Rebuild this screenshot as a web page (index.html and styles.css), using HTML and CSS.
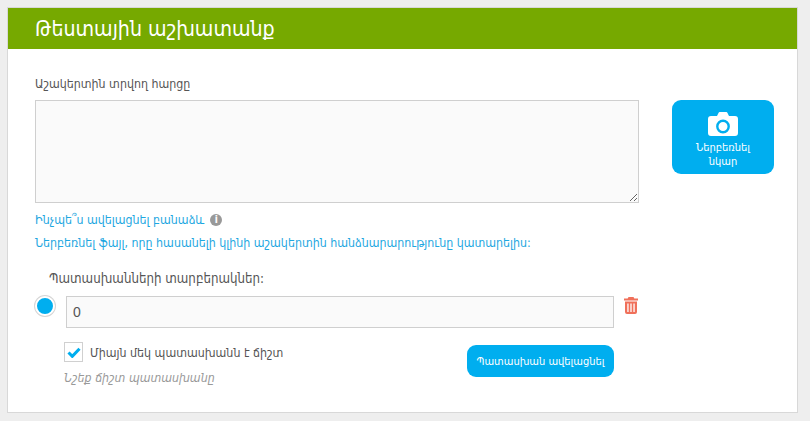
FILE: index.html
```html
<!DOCTYPE html>
<html lang="hy">
<head>
  <meta charset="UTF-8" />
  <meta name="viewport" content="width=device-width, initial-scale=1.0"/>
  <title>Թեստային աշխատանք</title>
  <link rel="stylesheet" href="styles.css">
</head>
<body>

  <div class="card">
    <h1 class="card-title">Թեստային աշխատանք</h1>

    <div class="card-body">
      <div class="question-row">
        <div class="question-col">
          <label class="field-label">Աշակերտին տրվող հարցը</label>
          <textarea class="question-input"></textarea>
        </div>
        <button class="upload-btn">
          <svg class="camera-icon" viewBox="0 0 30 24">
            <path fill="#fff" d="M3 4h6l1.500-3a1.500 1.500 0 0 1 1.300-1h6.400a1.500 1.500 0 0 1 1.300 1L21 4h6a3 3 0 0 1 3 3v14a3 3 0 0 1-3 3H3a3 3 0 0 1-3-3V7a3 3 0 0 1 3-3z"/>
            <circle cx="15" cy="14.500" r="5.700" fill="#fff" stroke="#00aeef" stroke-width="2.400"/>
          </svg>
          <span>Ներբեռնել<br>նկար</span>
        </button>
      </div>

      <div class="link-row">
        <a class="link">Ինչպե՞ս ավելացնել բանաձև</a>
        <span class="info-icon">i</span>
      </div>
      <div class="link-row second">
        <a class="link">Ներբեռնել ֆայլ, որը հասանելի կլինի աշակերտին հանձնարարությունը կատարելիս:</a>
      </div>

      <div class="answers">
        <div class="answers-label">Պատասխանների տարբերակներ:</div>
        <div class="answer-row">
          <span class="radio"></span>
          <input class="answer-input" type="text" value="0" />
          <svg class="trash-icon" viewBox="0 0 14 17">
            <path fill="#f0705a" fill-rule="evenodd" d="M4.500 0h5l.8 1.500H14v2H0v-2h3.700zM1 4.500h12V15a2 2 0 0 1-2 2H3a2 2 0 0 1-2-2zM3.300 6.500v8.500h1.300V6.500zM6.350 6.500v8.500h1.300V6.500zM9.400 6.500v8.500h1.300V6.500z"/>
          </svg>
        </div>
        <div class="options-row">
          <div>
            <div class="check-row">
              <span class="checkbox">
                <svg viewBox="0 0 16 13"><path fill="none" stroke="#00aeef" stroke-width="3.600" d="M1.500 6.500l4.500 4.500l8.500-9"/></svg>
              </span>
              <span class="check-text">Միայն մեկ պատասխանն է ճիշտ</span>
            </div>
            <div class="hint">Նշեք ճիշտ պատասխանը</div>
          </div>
          <button class="add-btn">Պատասխան ավելացնել</button>
        </div>
      </div>
    </div>
  </div>

</body>
</html>
```

FILE: styles.css
```css
html, body {
  height: 100%;
}
body {
  margin: 0;
  padding: 7px 12px 0 7px;
  box-sizing: border-box;
  font-family: "DejaVu Sans", "Noto Sans", sans-serif;
  font-stretch: condensed;
  font-size: 12.300px;
  background: #eeeeee;
  color: #555;
  overflow: hidden;
}
.card {
  background: #fff;
  border: 1px solid #d8d8d8;
  height: 406px;
  box-sizing: border-box;
}
.card-title {
  margin: 0;
  height: 41px;
  line-height: 41px;
  padding-left: 27px;
  background: #76a900;
  color: #fff;
  font-size: 21.200px;
  font-weight: normal;
}
.card-body {
  padding: 27px 23px 0 27px;
}
.question-row {
  display: flex;
  gap: 33px;
}
.question-col {
  width: 604px;
}
.field-label {
  display: block;
  height: 24px;
  line-height: 16px;
}
.question-input {
  display: block;
  width: 100%;
  height: 103px;
  box-sizing: border-box;
  background: #fafafa;
  border: 1px solid #cfcfcf;
  margin: 0;
}
.upload-btn {
  margin-top: 24px;
  width: 102px;
  height: 74px;
  padding: 0;
  background: #00aeef;
  color: #fff;
  border: none;
  border-radius: 9px;
  font-family: inherit;
  font-stretch: inherit;
  font-size: 11px;
  line-height: 14px;
  display: flex;
  flex-direction: column;
  align-items: center;
  justify-content: flex-start;
}
.camera-icon {
  width: 30px;
  height: 24px;
  margin: 12px 0 5px;
}
.link-row {
  display: flex;
  align-items: center;
  gap: 6px;
  margin-top: 9px;
  height: 16px;
}
.link-row.second {
  margin-top: 7px;
}
.link {
  color: #1ea7e1;
  white-space: nowrap;
}
.info-icon {
  width: 12px;
  height: 12px;
  border-radius: 50%;
  background: #999;
  color: #fff;
  font-size: 10px;
  font-weight: bold;
  line-height: 12px;
  text-align: center;
}
.answers {
  margin-top: 20px;
}
.answers-label {
  margin-left: 14px;
  height: 17px;
  line-height: 16px;
  font-size: 13.200px;
}
.answer-row {
  display: flex;
  align-items: flex-start;
  margin-top: 8px;
}
.radio {
  width: 20px;
  height: 20px;
  box-sizing: border-box;
  background: #00aeef;
  border: 2px solid #fff;
  box-shadow: 0 0 0 1px #d5d5d5;
  border-radius: 50%;
}
.answer-input {
  width: 548px;
  height: 32px;
  box-sizing: border-box;
  margin-left: 11px;
  padding: 0 6px;
  background: #fafafa;
  border: 1px solid #cfcfcf;
  color: #555;
  font-family: "Liberation Sans", sans-serif;
  font-size: 14px;
}
.trash-icon {
  width: 14px;
  height: 17px;
  margin-left: 10px;
  margin-top: 1px;
}
.options-row {
  display: flex;
  justify-content: space-between;
  align-items: flex-start;
  width: 579px;
  margin-top: 14px;
  padding-left: 29px;
  box-sizing: border-box;
}
.check-row {
  display: flex;
  align-items: center;
  gap: 7px;
}
.check-text {
  padding-top: 2px;
}
.checkbox {
  width: 19px;
  height: 20px;
  box-sizing: border-box;
  border: 1px solid #d0d0d0;
  display: flex;
  align-items: center;
  justify-content: center;
}
.checkbox svg {
  width: 14px;
  height: 11px;
}
.hint {
  margin-top: 9px;
  font-style: italic;
  color: #999;
}
.add-btn {
  margin-top: 3px;
  width: 147px;
  height: 32px;
  padding: 0;
  background: #00aeef;
  color: #fff;
  border: none;
  border-radius: 9px;
  font-family: inherit;
  font-stretch: inherit;
  font-size: 11px;
}
```
